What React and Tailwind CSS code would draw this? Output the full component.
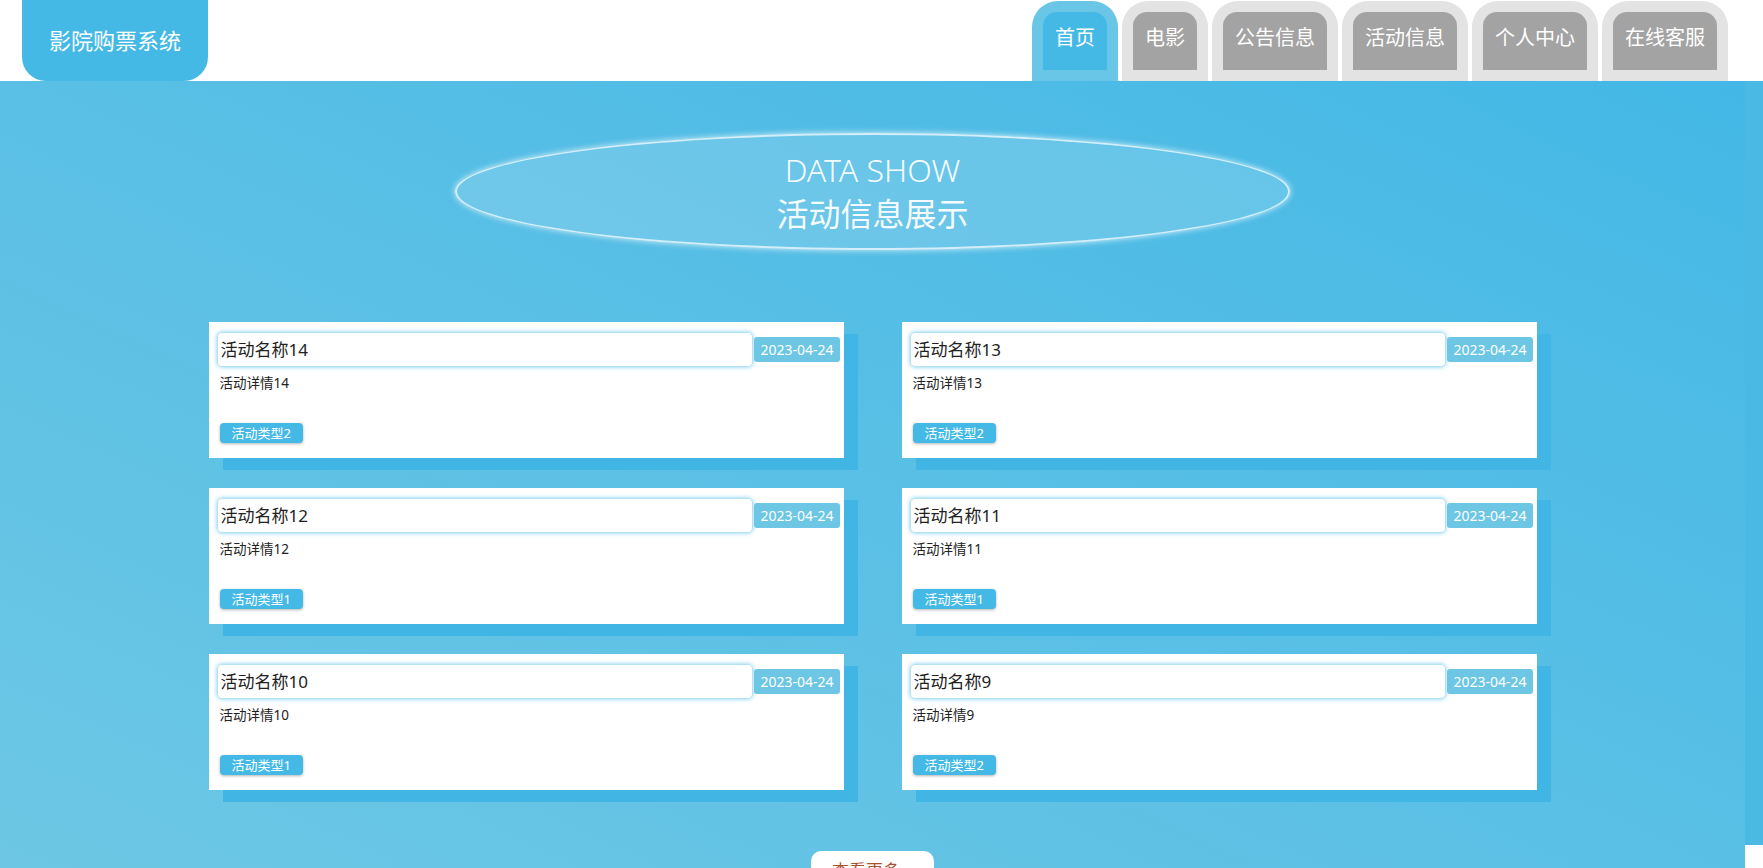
import React from "react";

const tabs = ["首页", "电影", "公告信息", "活动信息", "个人中心", "在线客服"];

const activities = [
    { name: "活动名称14", detail: "活动详情14", type: "活动类型2" },
    { name: "活动名称13", detail: "活动详情13", type: "活动类型2" },
    { name: "活动名称12", detail: "活动详情12", type: "活动类型1" },
    { name: "活动名称11", detail: "活动详情11", type: "活动类型1" },
    { name: "活动名称10", detail: "活动详情10", type: "活动类型1" },
    { name: "活动名称9", detail: "活动详情9", type: "活动类型2" },
];

function Tab({ label, active }) {
    return (
        <div className={`mt-[1px] h-[80px] px-[11px] pt-[11px] rounded-t-[26px] ${active ? "bg-[#6ac6e6]" : "bg-[#e3e3e3]"}`}>
            <div className={`h-[58px] px-[12px] pt-[12px] rounded-t-[14px] text-[20px] leading-[28px] text-white ${active ? "bg-[#45b9e6]" : "bg-[#a3a3a3]"}`}>
                {label}
            </div>
        </div>
    );
}

function ActivityCard({ item }) {
    return (
        <div className="bg-white h-[136px] pl-[8px] pr-[4px] pt-[10px] shadow-[14px_12px_0_0_#41b6e5] flex flex-col">
            <div className="flex items-center">
                <div className="flex-1 h-[35px] rounded-[5px] border border-[#b4e2f5] shadow-[0_0_4px_#7ccdee] pl-[3px] flex items-center text-[17px] text-[#222]">
                    {item.name}
                </div>
                <div className="ml-[1px] h-[25px] px-[6px] rounded-[3px] bg-[#6cc6e4] text-white text-[14px] leading-[25px]">
                    2023-04-24
                </div>
            </div>
            <div className="mt-[6px] pl-[3px] text-[13.5px] leading-[20px] text-[#222]">{item.detail}</div>
            <div className="mt-auto mb-[14px] ml-[3px]">
                <span className="inline-block h-[20px] px-[12px] rounded-[4px] bg-[#45b9e6] text-white text-[13px] leading-[20px] shadow-[0_1px_3px_rgba(0,0,0,0.3)]">
                    {item.type}
                </span>
            </div>
        </div>
    );
}

export default function App() {
    return (
        <div className="flex h-screen w-full overflow-hidden bg-white font-['Noto_Sans','Noto_Sans_CJK_SC',sans-serif]">
            <div className="flex-1 min-w-0 flex flex-col">
                {/* header */}
                <div className="h-[81px] shrink-0 flex justify-between bg-white">
                    <div className="ml-[22px] w-[186px] h-full rounded-b-[24px] bg-[#45b9e6] flex items-center justify-center text-white text-[22px]">
                        影院购票系统
                    </div>
                    <div className="flex gap-[4px] mr-[17px]">
                        {tabs.map((t, i) => (
                            <Tab key={t} label={t} active={i === 0} />
                        ))}
                    </div>
                </div>

                {/* main */}
                <div className="flex-1 flex flex-col items-center bg-linear-to-tr from-[#6dc7e4] to-[#43b8e6]">
                    <div className="mt-[52px] w-[835px] h-[117px] rounded-[50%] border-2 border-white/70 shadow-[0_0_6px_rgba(255,255,255,0.8)] bg-white/15 flex flex-col items-center justify-center text-white/95">
                        <div className="text-[32px] leading-[44px] font-light">DATA SHOW</div>
                        <div className="text-[32px] leading-[44px]">活动信息展示</div>
                    </div>

                    <div className="mt-[72px] w-[1328px] grid grid-cols-2 gap-x-[58px] gap-y-[30px]">
                        {activities.map((a) => (
                            <ActivityCard key={a.name} item={a} />
                        ))}
                    </div>

                    <button className="mt-[61px] px-[21px] py-[8px] rounded-[10px] bg-white text-[#a9502e] text-[17px] leading-[24px]">
                        查看更多 »
                    </button>
                </div>
            </div>

            {/* scrollbar */}
            <div className="w-[18px] shrink-0 flex flex-col bg-white">
                <div className="mt-[81px] h-[764px] bg-[#4abae5]"></div>
            </div>
        </div>
    );
}
